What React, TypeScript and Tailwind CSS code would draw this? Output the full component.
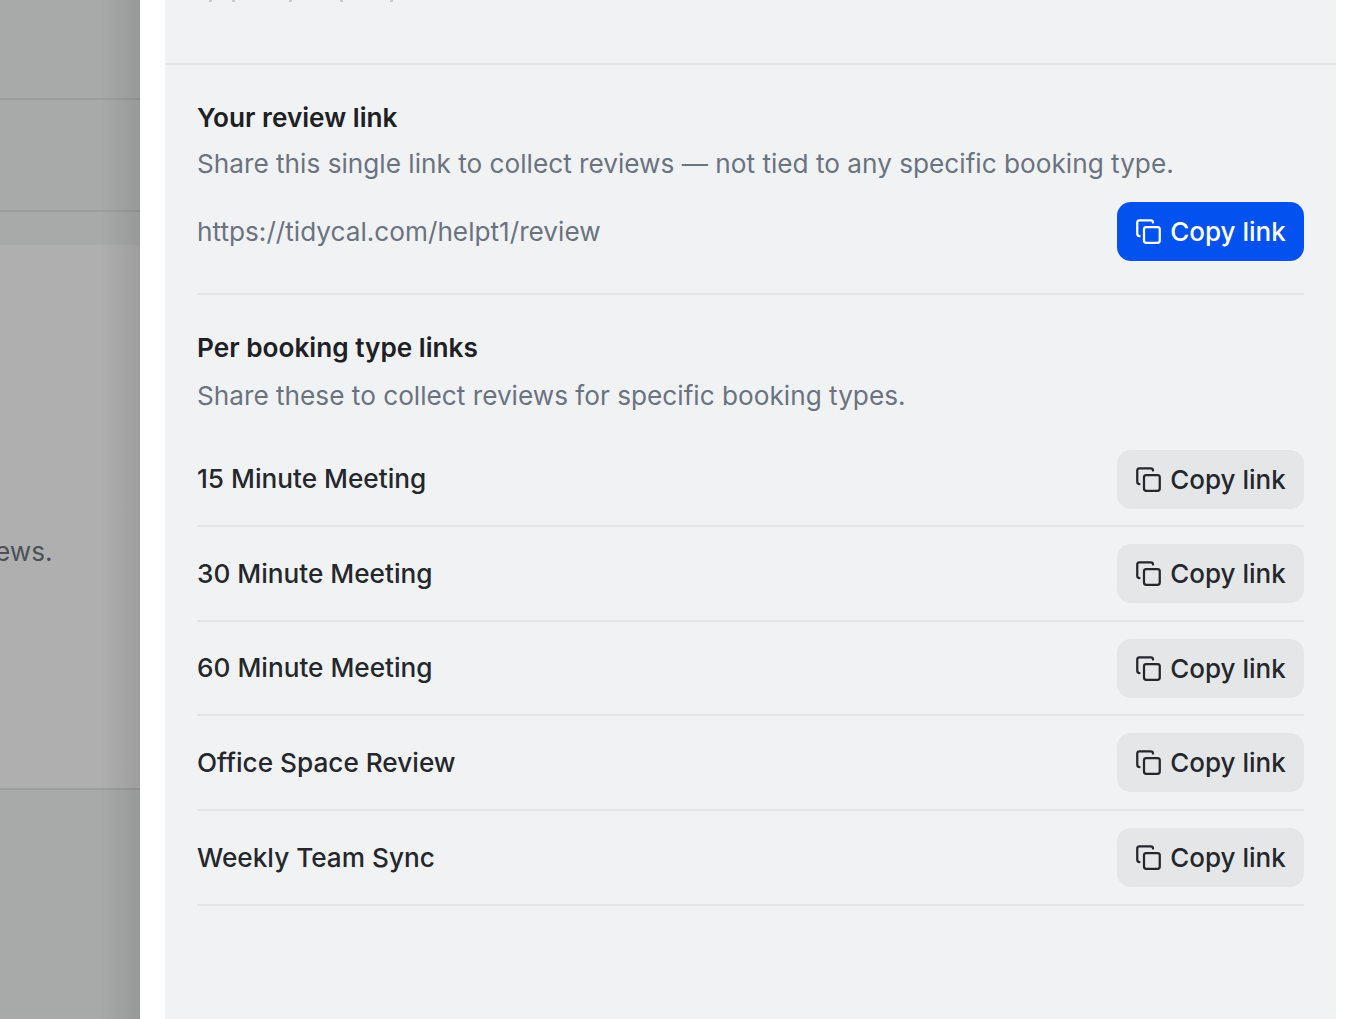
import { Copy } from 'lucide-react';

const bookingTypes = [
    { name: '15 Minute Meeting', rowClass: 'h-[94px]' },
    { name: '30 Minute Meeting', rowClass: 'h-[95px]' },
    { name: '60 Minute Meeting', rowClass: 'h-[94px]' },
    { name: 'Office Space Review', rowClass: 'h-[95px]' },
    { name: 'Weekly Team Sync', rowClass: 'h-[95px]' },
];

function CopyButton({ primary }: { primary?: boolean }) {
    return (
        <button
            className={
                primary
                    ? 'flex h-[59px] w-[187px] items-center justify-center gap-[8px] rounded-[14px] bg-[#0352f0] text-[26px] font-medium text-white'
                    : 'flex h-[59px] w-[187px] items-center justify-center gap-[8px] rounded-[14px] bg-[#e5e6e8] text-[26px] font-medium text-[#24272c]'
            }
        >
            <Copy className="h-[27px] w-[27px]" strokeWidth={2} />
            Copy link
        </button>
    );
}

export default function App() {
    return (
        <div className="flex h-[1019px] w-[1360px] overflow-hidden bg-white font-['Inter',sans-serif]">
            {/* Dimmed page behind the drawer */}
            <div className="relative h-full w-[140px] shrink-0 overflow-hidden bg-[#aeafae]">
                <div className="h-[100px] border-b-2 border-[#9c9e9d] bg-[#a8aaa9]" />
                <div className="h-[112px] border-b-2 border-[#9c9e9d] bg-[#a8aaa9]" />
                <div className="h-[33px] bg-[#a8aaa9]" />
                <div className="h-[543px] pt-[291px]">
                    <span className="-ml-[5px] block text-[26.2px] leading-[32px] text-[#4d5157]">ews.</span>
                </div>
                <div className="h-[231px] border-t-2 border-[#9c9e9d] bg-[#a8aaa9]" />
                <div className="absolute inset-y-0 right-0 w-[40px] bg-gradient-to-r from-transparent to-black/10" />
            </div>

            <div className="w-[25px] shrink-0" />

            {/* Drawer */}
            <div className="h-full w-[1171px] shrink-0 bg-[#f1f2f4]">
                <div className="h-[65px] border-b-2 border-[#e5e6ea]">
                    {/* descenders of the line scrolled off the top */}
                    <div className="flex pl-[44px]">
                        <span className="h-[2px] w-[3px] bg-[#c9cbce]" />
                        <span className="ml-[20px] h-[2px] w-[3px] bg-[#c9cbce]" />
                        <span className="ml-[54px] h-[2px] w-[3px] bg-[#c9cbce]" />
                        <span className="ml-[48px] h-[2px] w-[3px] bg-[#c9cbce]" />
                        <span className="ml-[47px] h-[2px] w-[3px] bg-[#c9cbce]" />
                    </div>
                </div>
                <div className="px-[32px] pt-[36px]">
                    <h3 className="text-[26.2px] font-semibold leading-[34px] text-[#1d2025]">Your review link</h3>
                    <p className="mt-[12px] text-[26.2px] leading-[34px] text-[#6b7280]">
                        Share this single link to collect reviews — not tied to any specific booking type.
                    </p>
                    <div className="mt-[21px] flex items-center justify-between border-b-2 border-[#e3e5ea] pb-[32px]">
                        <span className="text-[26.2px] leading-[34px] text-[#6b7280]">
                            https://tidycal.com/helpt1/review
                        </span>
                        <CopyButton primary />
                    </div>

                    <h3 className="mt-[36px] text-[26.2px] font-semibold leading-[34px] text-[#1d2025]">
                        Per booking type links
                    </h3>
                    <p className="mt-[14px] text-[26.2px] leading-[34px] text-[#6b7280]">
                        Share these to collect reviews for specific booking types.
                    </p>

                    <div className="mt-[20px]">
                        {bookingTypes.map((type) => (
                            <div
                                key={type.name}
                                className={`flex items-center justify-between border-b-2 border-[#e3e5ea] ${type.rowClass}`}
                            >
                                <span className="text-[26.2px] font-medium text-[#24272c]">{type.name}</span>
                                <CopyButton />
                            </div>
                        ))}
                    </div>
                </div>
            </div>
        </div>
    );
}
